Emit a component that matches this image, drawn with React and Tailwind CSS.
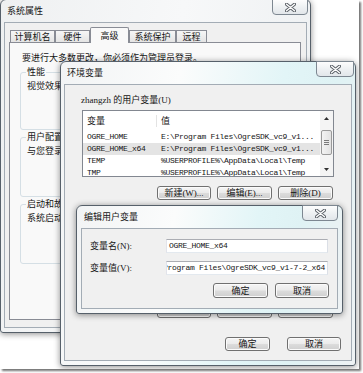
import React from "react"

const ui = "font-['Liberation_Serif','Noto_Sans_CJK_SC',serif] text-[9px] leading-[12px] text-[#151515]"
const mono = "font-['Liberation_Mono','Noto_Sans_CJK_SC',monospace] text-[8px] tracking-[-0.3px] leading-[12px]"
const glass = "bg-[linear-gradient(100deg,#f2f4f5_0%,#fbfcfc_35%,#e2f5f7_65%,#dff2f4_80%,#eef2f4_100%)]"

function CloseBtn({ className = "" }) {
  return (
    <div className={`absolute top-[-1px] flex h-[16px] items-center justify-center rounded-b-[4px] border border-[#7d8791] bg-[linear-gradient(#fdfdfd,#eef1f3_50%,#e2e6ea)] ${className}`}>
      <svg width="11" height="9" viewBox="0 0 11 9">
        <path d="M1.5 1.2 L9.5 7.8 M9.5 1.2 L1.5 7.8" stroke="#5a5f66" strokeWidth="3.2" strokeLinecap="round" />
        <path d="M1.5 1.2 L9.5 7.8 M9.5 1.2 L1.5 7.8" stroke="#ffffff" strokeWidth="1.4" strokeLinecap="round" />
      </svg>
    </div>
  )
}

function Btn({ children, className = "" }) {
  return (
    <div className={`flex h-[14px] items-center justify-center rounded-[3px] border border-[#707070] bg-[linear-gradient(#f5f5f5,#ebebeb_48%,#dcdcdc_52%,#cfcfcf)] shadow-[inset_0_0_0_1px_#fbfbfb] ${className}`}>
      {children}
    </div>
  )
}

function Win({ title, className, frame, closeClass, children }) {
  return (
    <div className={`absolute flex flex-col rounded-t-[6px] rounded-b-[3px] border border-[#56606a] px-[3px] pb-[4px] shadow-[0_1px_6px_rgba(0,0,0,0.45)] ${frame} ${className}`}>
      <div className="flex h-[22px] shrink-0 items-center pl-[3px]">{title}</div>
      <div className="flex flex-1 flex-col border border-[#a3acb5] bg-[#f0f0f0]">{children}</div>
      <CloseBtn className={closeClass} />
    </div>
  )
}

function Tab({ label, w, active }) {
  if (active) {
    return (
      <div className={`flex h-[16px] items-center justify-center rounded-t-[2px] border border-b-0 border-[#898c95] bg-[#f9f9f9] ${w}`}>
        {label}
      </div>
    )
  }
  return (
    <div className={`flex h-[13px] items-center justify-center border border-[#898c95] bg-[linear-gradient(#f6f6f6,#e4e4e4)] ${w}`}>
      {label}
    </div>
  )
}

function Group({ label, text, h }) {
  return (
    <div className={`relative ml-[10px] mr-[9px] rounded-[3px] border border-[#d5dfe5] pl-[6px] pt-[7px] ${h}`}>
      <span className="absolute left-[5px] top-[-7px] bg-[#f9f9f9] px-[1px]">{label}</span>
      <div>{text}</div>
    </div>
  )
}

function Arrow({ up }) {
  return (
    <svg width="5" height="3" viewBox="0 0 5 3">
      <path d={up ? "M0 3 L2.5 0 L5 3Z" : "M0 0 L2.5 3 L5 0Z"} fill="#303030" />
    </svg>
  )
}

function ListBox({ rows, header = true }) {
  return (
    <div className="ml-[17px] mt-[4px] flex h-[67px] w-[252px] shrink-0 overflow-hidden border border-[#828790] bg-white">
      <div className="flex min-w-0 flex-1 flex-col">
        <div className="flex h-[20px] shrink-0 items-center">
          <div className="h-[12px] w-[74px] shrink-0 border-r border-[#e3e3e3] pl-[4px]">{header ? "变量" : ""}</div>
          <div className="pl-[4px]">{header ? "值" : ""}</div>
        </div>
        {rows.map((r, i) => (
          <div key={i} className={`flex h-[12px] shrink-0 items-center ${r.sel ? "bg-[#e4e4e4]" : ""}`}>
            <div className={`w-[74px] shrink-0 pl-[4px] ${mono}`}>{r.name}</div>
            <div className={`whitespace-nowrap pl-[4px] ${mono}`}>{r.value}</div>
          </div>
        ))}
      </div>
      <div className="flex w-[13px] shrink-0 flex-col bg-[#f4f4f4]">
        <div className="flex h-[14px] items-center justify-center">
          <Arrow up />
        </div>
        <div className="mx-[1px] mt-[5px] flex h-[25px] flex-col items-center justify-center gap-[1px] rounded-[2px] border border-[#9a9a9a] bg-[linear-gradient(90deg,#f3f3f3,#e2e2e2)]">
          <div className="h-px w-[5px] bg-[#7a7a7a]" />
          <div className="h-px w-[5px] bg-[#7a7a7a]" />
          <div className="h-px w-[5px] bg-[#7a7a7a]" />
        </div>
        <div className="flex-1" />
        <div className="flex h-[14px] items-center justify-center">
          <Arrow />
        </div>
      </div>
    </div>
  )
}

const userVars = [
  { name: "OGRE_HOME", value: "E:\\Program Files\\OgreSDK_vc9_v1..." },
  { name: "OGRE_HOME_x64", value: "E:\\Program Files\\OgreSDK_vc9_v1...", sel: true },
  { name: "TEMP", value: "%USERPROFILE%\\AppData\\Local\\Temp" },
  { name: "TMP", value: "%USERPROFILE%\\AppData\\Local\\Temp" },
]

export default function App() {
  return (
    <div className="h-[373px] w-[363px] overflow-hidden bg-white">
      <div className={`relative h-[369px] w-[359px] overflow-hidden bg-white shadow-[2px_2px_2px_rgba(0,0,0,0.55)] ${ui}`}>
        {/* 系统属性 */}
        <Win
          title="系统属性"
          className="left-0 top-[-1px] h-[334px] w-[311px]"
          frame="bg-[linear-gradient(100deg,#eef0f1,#f7f8f9_50%,#eceff1)]"
          closeClass="right-[2px] w-[36px]"
        >
          <div className="flex flex-1 flex-col pb-[7px] pl-[4px] pr-[5px] pt-[4px]">
            <div className="relative z-10 -mb-px flex items-end pl-px">
              <Tab label="计算机名" w="w-[45px]" />
              <Tab label="硬件" w="w-[35px]" />
              <Tab label="高级" w="w-[39px]" active />
              <Tab label="系统保护" w="w-[47px]" />
              <Tab label="远程" w="w-[31px]" />
            </div>
            <div className="flex flex-1 flex-col border border-[#898c95] bg-[#f9f9f9] pt-[9px]">
              <div className="pl-[12px]">要进行大多数更改，你必须作为管理员登录。</div>
              <div className="mt-[8px] flex flex-col gap-[7px]">
                <Group label="性能" text="视觉效果，处理器计划，内存使用，以及虚拟内存" h="h-[58px]" />
                <Group label="用户配置文件" text="与您登录相关的桌面设置" h="h-[60px]" />
                <Group label="启动和故障恢复" text="系统启动、系统失败和调试信息" h="h-[60px]" />
              </div>
            </div>
          </div>
        </Win>

        {/* 环境变量 */}
        <Win
          title="环境变量"
          className="left-[60px] top-[61px] h-[305px] w-[296px]"
          frame={glass}
          closeClass="right-[1px] w-[38px]"
        >
          <div className="flex flex-1 flex-col">
            <div className="pl-[16px] pt-[9px]">zhangzh 的用户变量(U)</div>
            <ListBox rows={userVars} />
            <div className="ml-[92px] mt-[9px] flex gap-[6px]">
              <Btn className="w-[54px]">新建(W)...</Btn>
              <Btn className="w-[55px]">编辑(E)...</Btn>
              <Btn className="w-[55px]">删除(D)</Btn>
            </div>
            {/* system variables: covered by the edit dialog */}
            <div className="h-[12px] pt-[10px]" />
            <div className="mt-[10px]">
              <ListBox rows={[]} header={false} />
            </div>
            <div className="ml-[92px] mt-[11px] flex gap-[6px]">
              <Btn className="w-[54px]" />
              <Btn className="w-[55px]" />
              <Btn className="w-[55px]" />
            </div>
            <div className="ml-[160px] mt-[19px] flex gap-[17px]">
              <Btn className="w-[45px]">确定</Btn>
              <Btn className="w-[54px]">取消</Btn>
            </div>
          </div>
        </Win>

        {/* 编辑用户变量 */}
        <Win
          title="编辑用户变量"
          className="left-[76px] top-[205px] h-[109px] w-[267px] px-[4px]"
          frame={glass}
          closeClass="right-[4px] w-[36px]"
        >
          <div className="flex flex-1 flex-col pl-[8px] pt-[10px]">
            <div className="flex h-[14px] items-center">
              <div className="w-[76px] shrink-0">变量名(N):</div>
              <div className="flex h-[14px] w-[162px] items-center border border-[#abadb3] border-b-[#e3e9ef] border-l-[#e2e3ea] border-r-[#dbdfe6] bg-white pl-[2px]">
                <span className={mono}>OGRE_HOME_x64</span>
              </div>
            </div>
            <div className="mt-[8px] flex h-[14px] items-center">
              <div className="w-[76px] shrink-0">变量值(V):</div>
              <div className="flex h-[14px] w-[162px] items-center justify-end overflow-hidden border border-[#abadb3] border-b-[#e3e9ef] border-l-[#e2e3ea] border-r-[#dbdfe6] bg-white pr-[2px]">
                <span className={`whitespace-nowrap ${mono}`}>E:\Program Files\OgreSDK_vc9_v1-7-2_x64</span>
              </div>
            </div>
            <div className="ml-[123px] mt-[8px] flex gap-[7px]">
              <Btn className="h-[15px] w-[55px]">确定</Btn>
              <Btn className="h-[15px] w-[54px]">取消</Btn>
            </div>
          </div>
        </Win>
      </div>
    </div>
  )
}
